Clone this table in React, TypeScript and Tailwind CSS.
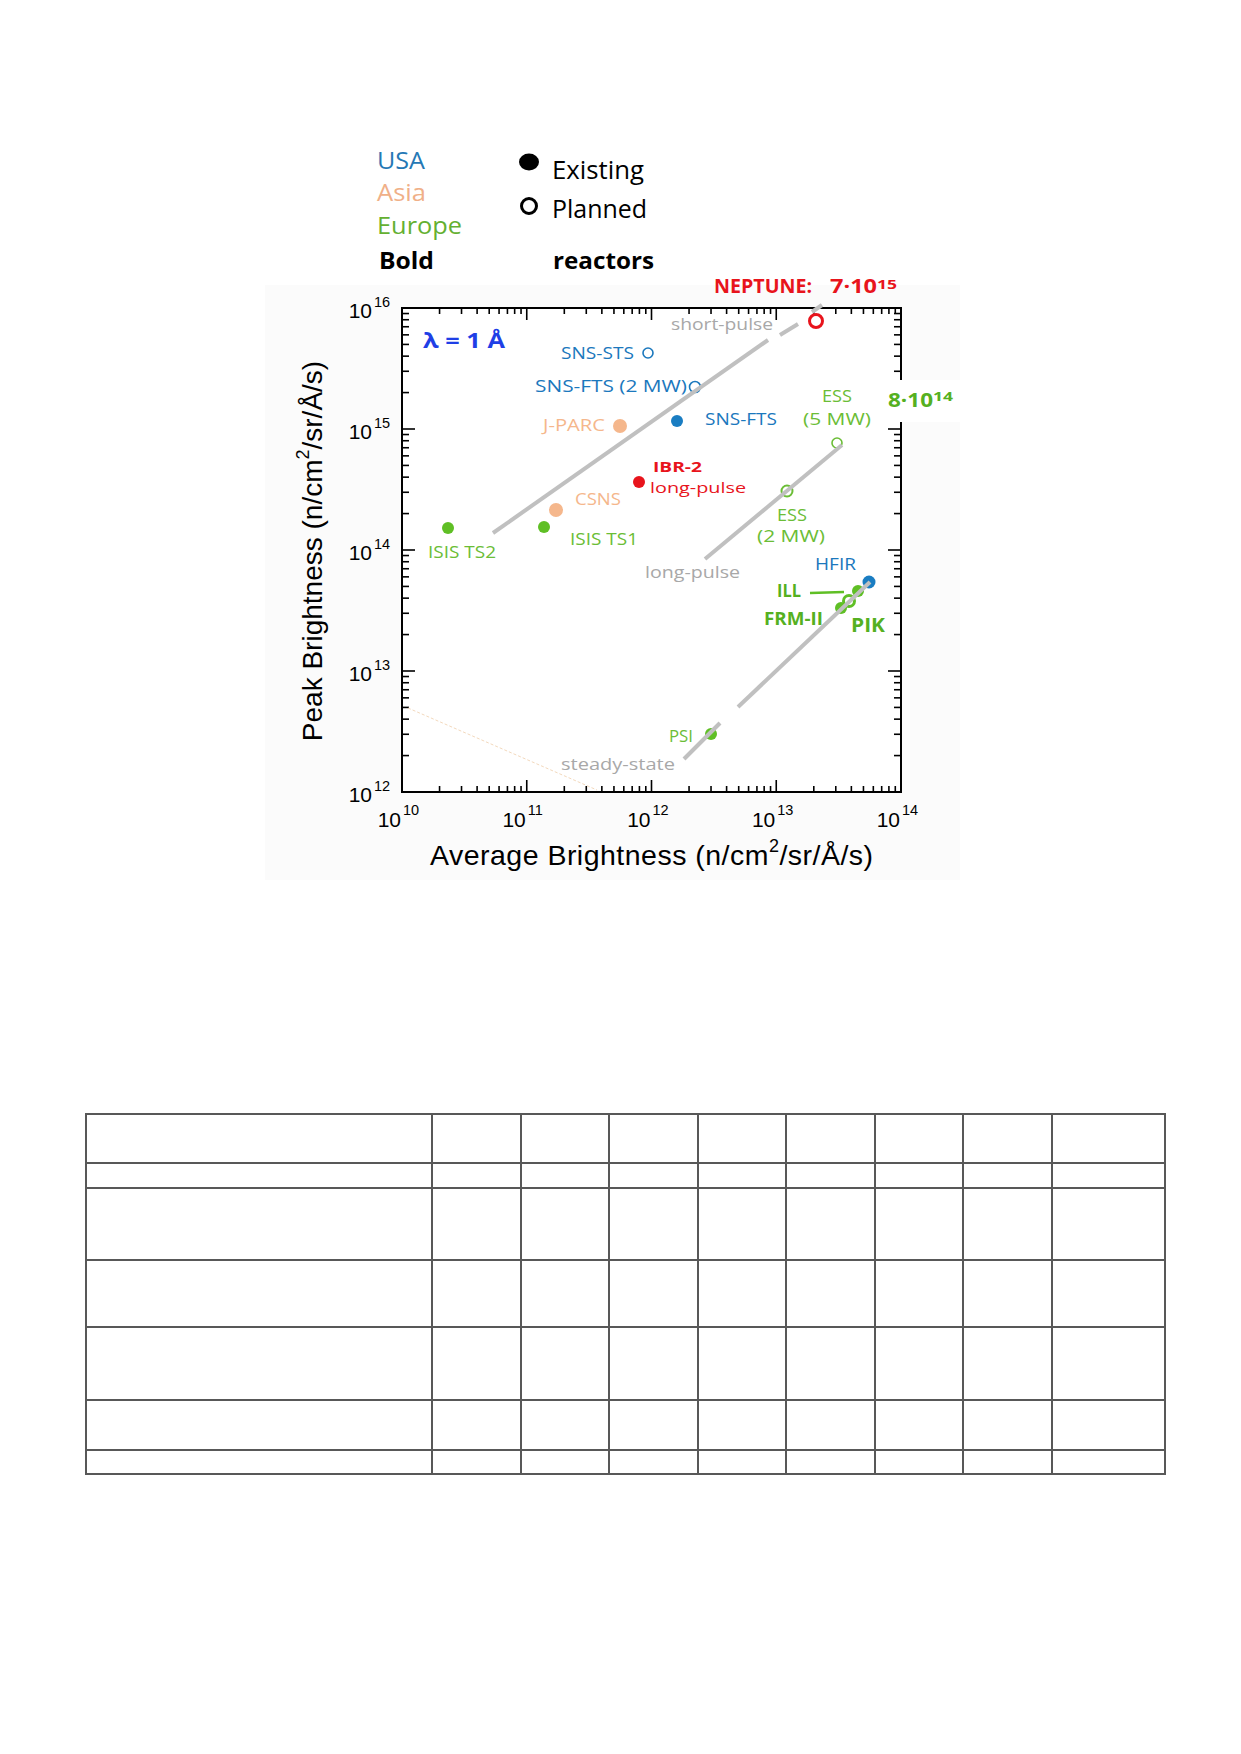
import React from "react";

const BLUE = "#1b78bd";
const PEACH = "#f5b78c";
const GREEN = "#6bbd36";
const GREEN_B = "#55b021";
const RED = "#e8141c";
const GRAY = "#a8a8a8";
const LINE = "#c0c0c0";

const X0 = 402;
const X1 = 901;
const Y0 = 792;
const Y1 = 308;
const DX = (X1 - X0) / 4;
const DY = (Y0 - Y1) / 4;

const LABEL_FONT = "'Open Sans', 'Noto Sans', sans-serif";
const AXIS_FONT = "'Liberation Sans', Arial, sans-serif";

type Label = {
  text: string;
  x: number;
  y: number;
  w: number;
  color: string;
  size?: number;
  bold?: boolean;
};

const labels: Label[] = [
  { text: "USA", x: 377, y: 169, w: 48, color: "#2578b5", size: 23 },
  { text: "Asia", x: 377, y: 201, w: 49, color: "#f0b088", size: 23 },
  { text: "Europe", x: 377, y: 234, w: 85, color: "#64b031", size: 23 },
  { text: "Bold", x: 379, y: 269, w: 55, color: "#000", size: 23, bold: true },
  { text: "Existing", x: 552, y: 179, w: 92, color: "#000", size: 26 },
  { text: "Planned", x: 552, y: 218, w: 95, color: "#000", size: 26 },
  { text: "reactors", x: 553, y: 269, w: 101, color: "#000", size: 23, bold: true },

  { text: "SNS-STS", x: 561, y: 359, w: 73, color: BLUE },
  { text: "SNS-FTS (2 MW)", x: 535, y: 392, w: 152, color: BLUE },
  { text: "J-PARC", x: 543, y: 431, w: 62, color: PEACH },
  { text: "SNS-FTS", x: 705, y: 425, w: 72, color: BLUE },
  { text: "IBR-2", x: 653, y: 472, w: 49, color: RED, size: 15, bold: true },
  { text: "long-pulse", x: 650, y: 492.5, w: 96, color: RED, size: 15 },
  { text: "CSNS", x: 575, y: 505, w: 46, color: PEACH },
  { text: "ISIS TS1", x: 570, y: 545, w: 68, color: GREEN },
  { text: "ISIS TS2", x: 428, y: 558, w: 68, color: GREEN },
  { text: "short-pulse", x: 671, y: 330, w: 102, color: GRAY },
  { text: "ESS", x: 822, y: 402, w: 30, color: GREEN },
  { text: "(5 MW)", x: 803, y: 425, w: 68, color: GREEN },
  { text: "ESS", x: 777, y: 521, w: 30, color: GREEN },
  { text: "(2 MW)", x: 757, y: 542, w: 68, color: GREEN },
  { text: "long-pulse", x: 645, y: 578, w: 95, color: GRAY },
  { text: "HFIR", x: 815, y: 570, w: 41, color: BLUE },
  { text: "ILL", x: 777, y: 597, w: 24, color: GREEN_B, bold: true },
  { text: "FRM-II", x: 764, y: 625, w: 59, color: GREEN_B, bold: true },
  { text: "PIK", x: 851, y: 632, w: 34, color: GREEN_B, size: 20, bold: true },
  { text: "PSI", x: 669, y: 742, w: 24, color: GREEN },
  { text: "steady-state", x: 561, y: 770, w: 114, color: GRAY },
];

function majorMinor(decades: number) {
  const out: { f: number; major: boolean }[] = [];
  for (let d = 0; d < decades; d++) {
    out.push({ f: d, major: true });
    for (let k = 2; k <= 9; k++) out.push({ f: d + Math.log10(k), major: false });
  }
  out.push({ f: decades, major: true });
  return out;
}

function Ticks() {
  const ticks = majorMinor(4);
  return (
    <g stroke="#000" strokeWidth={1.6}>
      {ticks.map((t, i) => {
        const x = X0 + t.f * DX;
        const y = Y0 - t.f * DY;
        const lx = t.major ? 12 : 6;
        const ly = t.major ? 13 : 7;
        return (
          <g key={i}>
            <line x1={x} y1={Y0} x2={x} y2={Y0 - lx} />
            <line x1={x} y1={Y1} x2={x} y2={Y1 + lx} />
            <line x1={X0} y1={y} x2={X0 + ly} y2={y} />
            <line x1={X1} y1={y} x2={X1 - ly} y2={y} />
          </g>
        );
      })}
    </g>
  );
}

function AxisLabels() {
  const d = [0, 1, 2, 3, 4];
  return (
    <g fontFamily={AXIS_FONT} fill="#000">
      {d.map((i) => {
        const x = X0 + i * DX;
        return (
          <g key={`x${i}`}>
            <text x={x - 1} y={827} fontSize={21} textAnchor="end">
              10
            </text>
            <text x={x + 1} y={815} fontSize={14.5}>
              {10 + i}
            </text>
          </g>
        );
      })}
      {d.map((i) => {
        const y = Y0 - i * DY;
        return (
          <g key={`y${i}`}>
            <text x={372} y={y + 10} fontSize={21} textAnchor="end">
              10
            </text>
            <text x={374} y={y - 1} fontSize={14.5}>
              {12 + i}
            </text>
          </g>
        );
      })}
      <text x={430} y={865} fontSize={28.5} textLength={443}>
        Average Brightness (n/cm
        <tspan dy={-13} fontSize={18}>
          2
        </tspan>
        <tspan dy={13}>/sr/Å/s)</tspan>
      </text>
      <text
        x={322}
        y={551}
        fontSize={28}
        textAnchor="middle"
        transform="rotate(-90 322 551)"
      >
        Peak Brightness (n/cm
        <tspan dy={-13} fontSize={18}>
          2
        </tspan>
        <tspan dy={13}>/sr/Å/s)</tspan>
      </text>
    </g>
  );
}

function BrightnessChart() {
  return (
    <svg
      width={750}
      height={760}
      viewBox="250 130 750 760"
      className="block"
    >
      <rect x={265} y={285} width={695} height={595} fill="#fbfbfb" />

      {/* legend markers */}
      <ellipse cx={529} cy={162} rx={10} ry={8.5} fill="#000" />
      <circle cx={529} cy={206} r={7.5} fill="none" stroke="#000" strokeWidth={3} />

      {/* frame */}
      <rect x={X0} y={Y1} width={X1 - X0} height={Y0 - Y1} fill="#fff" stroke="#000" strokeWidth={2} />
      <Ticks />
      <AxisLabels />

      {/* faint guide */}
      <line x1={408} y1={708} x2={597} y2={790} stroke="#f3d9bd" strokeWidth={1} strokeDasharray="3 2" />

      {/* filled sources */}
      <circle cx={620} cy={426} r={7} fill={PEACH} />
      <circle cx={556} cy={510} r={7} fill={PEACH} />
      <circle cx={677} cy={421} r={6} fill="#1a7dc2" />
      <circle cx={639} cy={482} r={6} fill={RED} />
      <circle cx={544} cy={527} r={6} fill="#5fbf25" />
      <circle cx={448} cy={528} r={6} fill="#5fbf25" />
      <circle cx={869} cy={582} r={6.5} fill="#1a7dc2" />
      <circle cx={711} cy={734} r={6} fill="#5fbf25" />
      <circle cx={858} cy={591} r={6} fill="#5fbf25" />
      <circle cx={841} cy={608} r={6} fill="#5fbf25" />

      {/* planned sources */}
      <circle cx={648} cy={353} r={5} fill="#fff" stroke={BLUE} strokeWidth={1.6} />
      <circle cx={695} cy={387} r={5.5} fill="#fff" stroke={BLUE} strokeWidth={1.6} />
      <circle cx={837} cy={443} r={5} fill="#fff" stroke={GREEN} strokeWidth={1.6} />
      <circle cx={787} cy={491} r={5.5} fill="#fff" stroke={GREEN} strokeWidth={2} />
      <circle cx={849} cy={601} r={5.5} fill="#fff" stroke="#5fbf25" strokeWidth={3} />

      {/* trend lines */}
      <g stroke={LINE} strokeWidth={4} fill="none">
        <line x1={493} y1={533} x2={768} y2={340} />
        <line x1={780} y1={335} x2={798} y2={324} />
        <line x1={812} y1={312} x2={822} y2={305} />
        <line x1={705} y1={559} x2={842} y2={445} />
        <line x1={684} y1={759} x2={720} y2={723} />
        <line x1={738} y1={707} x2={870} y2={582} />
      </g>
      <line x1={810} y1={593} x2={844} y2={592} stroke="#5fbf25" strokeWidth={2.5} />

      <circle cx={816} cy={321} r={6.5} fill="#fff" stroke={RED} strokeWidth={3} />

      {/* break in right axis behind the 8·10^14 label */}
      <rect x={872} y={380} width={108} height={42} rx={12} fill="#fff" />

      <g fontFamily={LABEL_FONT}>
        {labels.map((l, i) => (
          <text
            key={i}
            x={l.x}
            y={l.y}
            fill={l.color}
            fontSize={l.size ?? 17}
            fontWeight={l.bold ? 700 : 400}
            textLength={l.w}
            lengthAdjust="spacingAndGlyphs"
          >
            {l.text}
          </text>
        ))}
        <text x={423} y={348} fill="#1f3fe6" fontSize={21} fontWeight={700} textLength={82} lengthAdjust="spacingAndGlyphs">
          λ = 1 Å
        </text>
        <g fill={RED} fontWeight={700}>
          <text x={714} y={293} fontSize={19} textLength={98} lengthAdjust="spacingAndGlyphs">
            NEPTUNE:
          </text>
          <text x={830} y={293} fontSize={19} textLength={47} lengthAdjust="spacingAndGlyphs">
            7·10
          </text>
          <text x={877} y={289} fontSize={13} textLength={20} lengthAdjust="spacingAndGlyphs">
            15
          </text>
        </g>
        <g fill={GREEN_B} fontWeight={700}>
          <text x={888} y={407} fontSize={19} textLength={45} lengthAdjust="spacingAndGlyphs">
            8·10
          </text>
          <text x={933} y={401} fontSize={13} textLength={20} lengthAdjust="spacingAndGlyphs">
            14
          </text>
        </g>
      </g>
    </svg>
  );
}

const colWidths = [346, 89, 88, 89, 88, 89, 88, 89, 113];
const rowHeights = [49, 25, 72, 67, 73, 50, 24];

function EmptyTable() {
  return (
    <table className="ml-[85px] mt-[223px] w-[1079px] table-fixed border-collapse">
      <colgroup>
        {colWidths.map((w, i) => (
          <col key={i} style={{ width: w }} />
        ))}
      </colgroup>
      <tbody>
        {rowHeights.map((h, r) => (
          <tr key={r} style={{ height: h }}>
            {colWidths.map((_, c) => (
              <td key={c} className="border-2 border-[#585858] p-0" />
            ))}
          </tr>
        ))}
      </tbody>
    </table>
  );
}

export default function App() {
  return (
    <div className="w-[1241px] min-h-[1754px] bg-white pt-[130px]">
      <div className="pl-[250px]">
        <BrightnessChart />
      </div>
      <EmptyTable />
    </div>
  );
}
